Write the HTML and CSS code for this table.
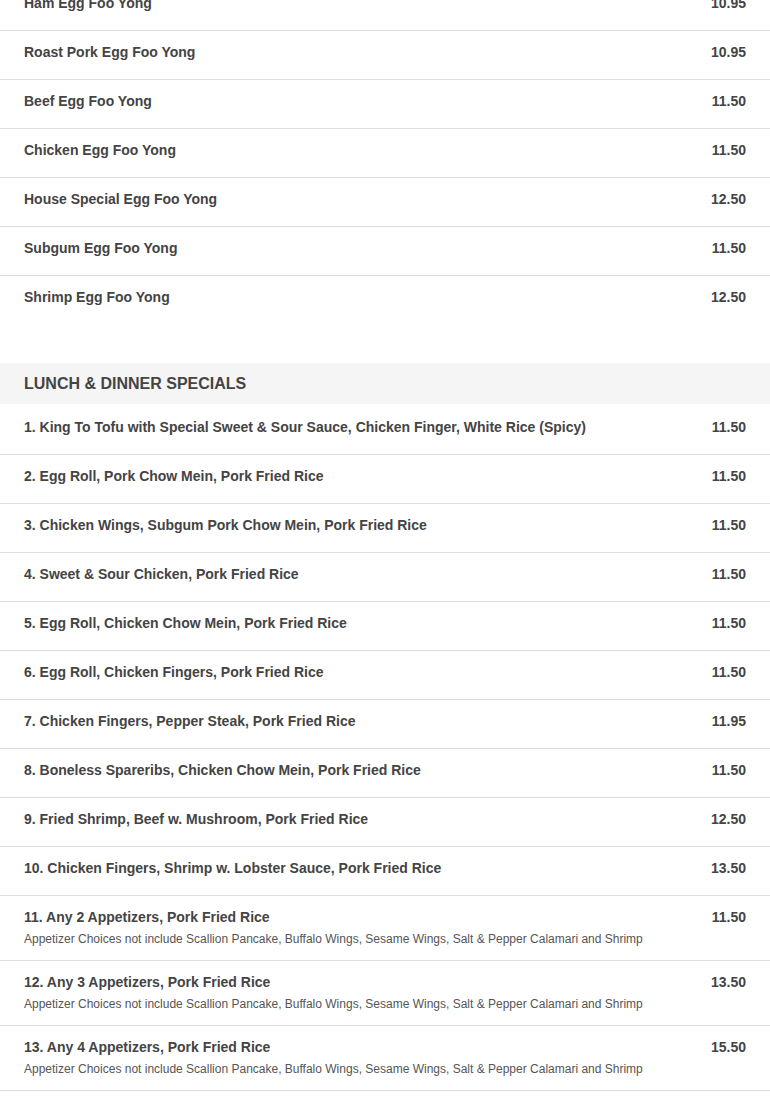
FILE: index.html
```html
<!DOCTYPE html>
<html>
<head>
<meta charset="utf-8">
<link rel="stylesheet" href="styles.css">
</head>
<body>
<div class="menu">
  <section class="section">
    <div class="item"><div class="info"><div class="name">Ham Egg Foo Yong</div></div><div class="price">10.95</div></div>
    <div class="item"><div class="info"><div class="name">Roast Pork Egg Foo Yong</div></div><div class="price">10.95</div></div>
    <div class="item"><div class="info"><div class="name">Beef Egg Foo Yong</div></div><div class="price">11.50</div></div>
    <div class="item"><div class="info"><div class="name">Chicken Egg Foo Yong</div></div><div class="price">11.50</div></div>
    <div class="item"><div class="info"><div class="name">House Special Egg Foo Yong</div></div><div class="price">12.50</div></div>
    <div class="item"><div class="info"><div class="name">Subgum Egg Foo Yong</div></div><div class="price">11.50</div></div>
    <div class="item"><div class="info"><div class="name">Shrimp Egg Foo Yong</div></div><div class="price">12.50</div></div>
  </section>
  <section class="section">
    <h2 class="section-title">LUNCH &amp; DINNER SPECIALS</h2>
    <div class="item"><div class="info"><div class="name">1. King To Tofu with Special Sweet &amp; Sour Sauce, Chicken Finger, White Rice (Spicy)</div></div><div class="price">11.50</div></div>
    <div class="item"><div class="info"><div class="name">2. Egg Roll, Pork Chow Mein, Pork Fried Rice</div></div><div class="price">11.50</div></div>
    <div class="item"><div class="info"><div class="name">3. Chicken Wings, Subgum Pork Chow Mein, Pork Fried Rice</div></div><div class="price">11.50</div></div>
    <div class="item"><div class="info"><div class="name">4. Sweet &amp; Sour Chicken, Pork Fried Rice</div></div><div class="price">11.50</div></div>
    <div class="item"><div class="info"><div class="name">5. Egg Roll, Chicken Chow Mein, Pork Fried Rice</div></div><div class="price">11.50</div></div>
    <div class="item"><div class="info"><div class="name">6. Egg Roll, Chicken Fingers, Pork Fried Rice</div></div><div class="price">11.50</div></div>
    <div class="item"><div class="info"><div class="name">7. Chicken Fingers, Pepper Steak, Pork Fried Rice</div></div><div class="price">11.95</div></div>
    <div class="item"><div class="info"><div class="name">8. Boneless Spareribs, Chicken Chow Mein, Pork Fried Rice</div></div><div class="price">11.50</div></div>
    <div class="item"><div class="info"><div class="name">9. Fried Shrimp, Beef w. Mushroom, Pork Fried Rice</div></div><div class="price">12.50</div></div>
    <div class="item"><div class="info"><div class="name">10. Chicken Fingers, Shrimp w. Lobster Sauce, Pork Fried Rice</div></div><div class="price">13.50</div></div>
    <div class="item"><div class="info"><div class="name">11. Any 2 Appetizers, Pork Fried Rice</div><div class="desc">Appetizer Choices not include Scallion Pancake, Buffalo Wings, Sesame Wings, Salt &amp; Pepper Calamari and Shrimp</div></div><div class="price">11.50</div></div>
    <div class="item"><div class="info"><div class="name">12. Any 3 Appetizers, Pork Fried Rice</div><div class="desc">Appetizer Choices not include Scallion Pancake, Buffalo Wings, Sesame Wings, Salt &amp; Pepper Calamari and Shrimp</div></div><div class="price">13.50</div></div>
    <div class="item"><div class="info"><div class="name">13. Any 4 Appetizers, Pork Fried Rice</div><div class="desc">Appetizer Choices not include Scallion Pancake, Buffalo Wings, Sesame Wings, Salt &amp; Pepper Calamari and Shrimp</div></div><div class="price">15.50</div></div>
    <div class="item"><div class="info"><div class="name">14. Any 5 Appetizers, Pork Fried Rice</div><div class="desc">Appetizer Choices not include Scallion Pancake, Buffalo Wings, Sesame Wings, Salt &amp; Pepper Calamari and Shrimp</div></div><div class="price">17.50</div></div>
  </section>
</div>
</body>
</html>
```

FILE: styles.css
```css
html, body {
  margin: 0;
  padding: 0;
  background: #fff;
}
body {
  font-family: "Liberation Sans", Arial, sans-serif;
  color: #444;
  overflow: hidden;
}
.menu {
  margin-top: -18px;
}
.section {
  padding-bottom: 39px;
}
.section-title {
  margin: 0;
  background: #f5f5f5;
  padding: 11px 24px;
  font-size: 16px;
  line-height: 19px;
  font-weight: bold;
  color: #444;
}
.item {
  display: flex;
  align-items: flex-start;
  padding: 12px 24px;
  border-bottom: 1px solid #dedede;
}
.section .item:last-child {
  border-bottom: none;
}
.section-title + .item {
  padding-top: 14px;
}
.info {
  flex: 1;
  min-width: 0;
}
.name {
  font-size: 14px;
  line-height: 18px;
  font-weight: bold;
  margin-bottom: 6px;
  color: #444;
}
.desc {
  font-size: 12px;
  line-height: 16px;
  color: #555;
  margin-top: -1px;
  margin-bottom: 1px;
}
.price {
  font-size: 14px;
  line-height: 18px;
  font-weight: bold;
  color: #444;
  margin-left: 16px;
}
```
